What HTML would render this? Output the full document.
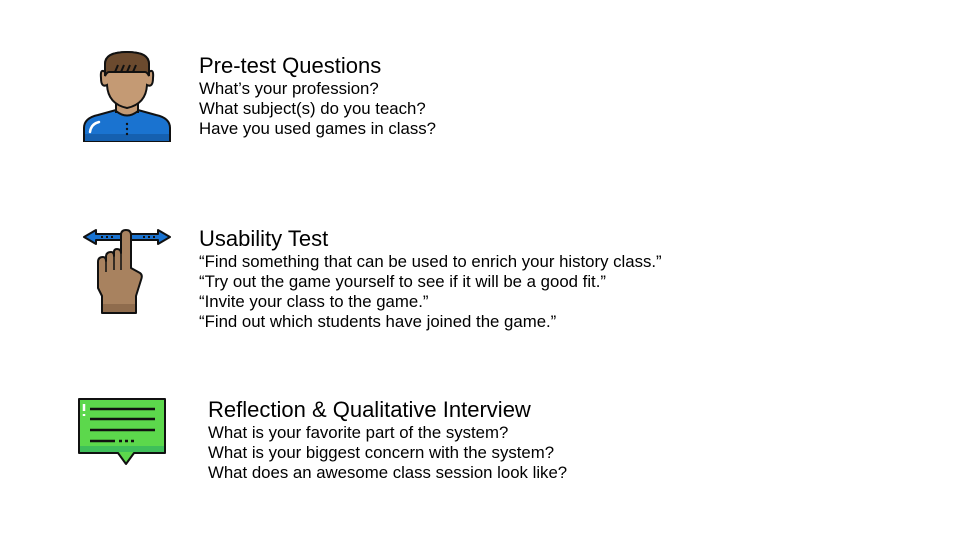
<!DOCTYPE html>
<html><head><meta charset="utf-8"><style>
body{margin:0;width:960px;height:540px;background:#fff;position:relative;overflow:hidden;font-family:"Liberation Sans",sans-serif;color:#000}
.t{position:absolute;font-size:16.8px;line-height:20px;white-space:nowrap}
.t .h{font-size:22px;line-height:26px}
svg{position:absolute;left:0;top:0}
</style></head><body>
<svg width="960" height="540" viewBox="0 0 960 540">
<!-- person -->
<path d="M84 141 V128 Q84 118 98 115 L116 110 H138 L156 115 Q170 118 170 128 V141 Z" fill="#1a73d0" stroke="#111" stroke-width="2"/>
<rect x="85" y="134" width="84" height="7" fill="#1560b0"/>
<path d="M90 132 Q91 124 99 122" stroke="#fff" stroke-width="2.5" fill="none" stroke-linecap="round"/>
<rect x="116" y="100" width="22" height="12" fill="#c49a74" stroke="#111" stroke-width="2"/>
<path d="M116 111 Q127 120 138 111" fill="#c49a74" stroke="#111" stroke-width="2"/>
<circle cx="127" cy="124" r="1.2" fill="#111"/><circle cx="127" cy="129" r="1.2" fill="#111"/><circle cx="127" cy="134" r="1.2" fill="#111"/>
<path d="M105 72 Q100 68 101 78 Q101 88 107 85 Q108 104 127 108 Q146 104 147 85 Q153 88 153 78 Q154 68 149 72 V64 Q149 52 127 52 Q105 52 105 64 Z" fill="#c49a74" stroke="#111" stroke-width="2"/>
<path d="M105 76 V64 Q105 52 127 52 Q149 52 149 64 V76 Q147 72 145 72 H109 Q107 72 105 76 Z" fill="#6b4a2e" stroke="#111" stroke-width="2"/>
<path d="M115 72 L118 65 M121 72 L124 65 M127 72 L130 65 M133 72 L136 65" stroke="#111" stroke-width="2"/>
<!-- hand & arrows -->
<path d="M84 237 L96 230 V234 H158 V230 L170 237 L158 244 V240 H96 V244 Z" fill="#1a73d0" stroke="#111" stroke-width="2" stroke-linejoin="round"/>
<path d="M101 237h2m3 0h2m3 0h2M143 237h2m3 0h2m3 0h2" stroke="#111" stroke-width="2"/>
<path d="M102 313 V296 L98 288 V262 Q98 257 103 257 Q106 257 106 261 V257 Q106 252 111 252 Q114 252 114 256 V252 Q114 249 117 249 Q121 249 121 253 V235 Q121 230 126 230 Q131 230 131 235 V268 L140 273 Q143 275 141 280 L136 296 V313 Z" fill="#a8825f" stroke="#111" stroke-width="2" stroke-linejoin="round"/>
<path d="M106 261 V272 M114 256 V270 M121 253 V270" stroke="#111" stroke-width="1.5"/>
<rect x="103" y="304" width="32" height="8" fill="#8f6c4d"/>
<!-- chat -->
<path d="M79 399 H165 V453 H134 L126 464 L118 453 H79 Z" fill="#5cd84c" stroke="#111" stroke-width="2" stroke-linejoin="round"/>
<rect x="80" y="446" width="84" height="6" fill="#3fbf5a"/>
<path d="M90 409 H155 M90 419 H155 M90 430 H155 M90 441 H115" stroke="#111" stroke-width="2.5"/>
<path d="M119 441h3m3 0h3m3 0h3" stroke="#111" stroke-width="2.5"/>
<path d="M84 404 V411" stroke="#fff" stroke-width="2.5"/><path d="M84 414 V416" stroke="#fff" stroke-width="2.5"/>
</svg>
<div class="t" style="left:199px;top:53px"><div class="h">Pre-test Questions</div>What’s your profession?<br>What subject(s) do you teach?<br>Have you used games in class?</div>
<div class="t" style="left:199px;top:226px"><div class="h">Usability Test</div>“Find something that can be used to enrich your history class.”<br>“Try out the game yourself to see if it will be a good fit.”<br>“Invite your class to the game.”<br>“Find out which students have joined the game.”</div>
<div class="t" style="left:208px;top:397px"><div class="h">Reflection &amp; Qualitative Interview</div>What is your favorite part of the system?<br>What is your biggest concern with the system?<br>What does an awesome class session look like?</div>
</body></html>
